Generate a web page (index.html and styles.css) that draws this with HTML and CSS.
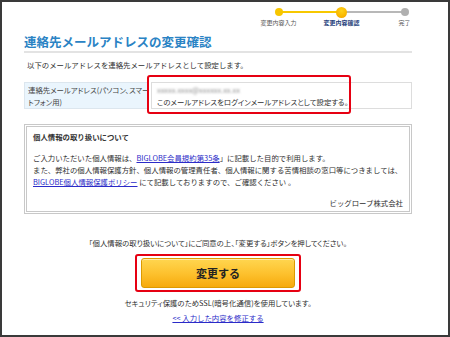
FILE: index.html
```html
<!DOCTYPE html>
<html lang="ja">
<head>
<meta charset="utf-8">
<title>連絡先メールアドレスの変更確認</title>
<link rel="stylesheet" href="styles.css">
</head>
<body>
<div class="frame">
  <div class="main">
    <div class="steps">
      <div class="step done first">
        <div class="dot-box"><span class="dot"></span></div>
        <div class="step-label">変更内容入力</div>
      </div>
      <div class="step current">
        <div class="dot-box"><span class="dot"></span></div>
        <div class="step-label">変更内容確認</div>
      </div>
      <div class="step todo last">
        <div class="dot-box"><span class="dot"></span></div>
        <div class="step-label">完了</div>
      </div>
    </div>

    <h1 class="title">連絡先メールアドレスの変更確認</h1>
    <p class="intro">以下のメールアドレスを連絡先メールアドレスとして設定します。</p>

    <div class="row">
      <div class="row-label">連絡先メールアドレス(パソコン、スマー<br>トフォン用)</div>
      <div class="row-value">
        <span class="blur">xxxxx.xxxx@xxxxxx.xx.xx</span><br>
        このメールアドレスをログインメールアドレスとして設定する。
      </div>
      <div class="highlight row-highlight"></div>
    </div>

    <div class="info">
      <div class="info-title">個人情報の取り扱いについて</div>
      <p class="info-text">ご入力いただいた個人情報は、<a href="#" class="link">BIGLOBE会員規約第35条</a>」に記載した目的で利用します。<br>また、弊社の個人情報保護方針、個人情報の管理責任者、個人情報に関する苦情相談の窓口等につきましては、<br><a href="#" class="link">BIGLOBE個人情報保護ポリシー</a> にて記載しておりますので、ご確認ください 。</p>
      <p class="company">ビッグローブ株式会社</p>
    </div>

    <p class="agree">「個人情報の取り扱いについて」にご同意の上、「変更する」ボタンを押してください。</p>

    <div class="btn-wrap">
      <div class="btn-holder">
        <button class="btn" type="button">変更する</button>
        <div class="highlight btn-highlight"></div>
      </div>
    </div>

    <p class="ssl">セキュリティ保護のためSSL(暗号化通信)を使用しています。</p>
    <p class="back"><a href="#" class="link">&lt;&lt; 入力した内容を修正する</a></p>
  </div>
</div>
</body>
</html>
```

FILE: styles.css
```css
* {
  box-sizing: border-box;
}

body {
  margin: 0;
  background: #fff;
  color: #2e2e2e;
  font-family: "Noto Sans CJK JP", "Noto Sans", sans-serif;
  font-size: 7.4px;
  line-height: 12px;
}

p {
  margin: 0;
}

.frame {
  width: 450px;
  height: 337px;
  border: 2px solid #3a3a3a;
  overflow: hidden;
}

.main {
  padding: 0 36px 0 22px;
}

/* step indicator */
.steps {
  display: flex;
  width: 189px;
  margin: 3px 0 0 223px;
}

.step {
  width: 63px;
  display: flex;
  flex-direction: column;
  align-items: center;
}

.dot-box {
  position: relative;
  width: 100%;
  height: 14px;
  display: flex;
  align-items: center;
  justify-content: center;
}

.dot-box::before,
.dot-box::after {
  content: "";
  position: absolute;
  top: 6px;
  height: 2px;
  width: 50%;
}

.dot-box::before {
  left: 0;
}

.dot-box::after {
  right: 0;
}

.done .dot-box::after,
.current .dot-box::before {
  background: #f7c800;
}

.current .dot-box::after,
.todo .dot-box::before {
  background: #b8b8b8;
}

.first .dot-box::before,
.last .dot-box::after {
  display: none;
}

.dot {
  position: relative;
  z-index: 1;
  width: 8px;
  height: 8px;
  border-radius: 50%;
  background: #f7c600;
}

.current .dot {
  width: 11px;
  height: 11px;
  background: radial-gradient(circle at 50% 35%, #ffd21a 0%, #f9b800 60%, #f29a00 100%);
}

.todo .dot {
  background: #b0b0b0;
}

.step-label {
  font-size: 6px;
  line-height: 8px;
  white-space: nowrap;
  color: #555;
}

.current .step-label {
  color: #1d3d7a;
  font-weight: bold;
}

/* title */
.title {
  margin: 7px 0 0;
  font-size: 12.5px;
  line-height: 16px;
  font-weight: bold;
  color: #2a83c4;
  padding-bottom: 1px;
  border-bottom: 2px solid #e3e3e3;
  white-space: nowrap;
}

.intro {
  margin-top: 6px;
  padding-left: 3px;
}

/* row */
.row {
  position: relative;
  display: flex;
  margin-top: 11px;
}

.row-label {
  width: 125px;
  flex: none;
  background: #eaf5fd;
  border: 1px solid #dce6ee;
  padding: 1px 3px 0;
  white-space: nowrap;
  font-feature-settings: "palt";
  color: #444;
}

.row-value {
  flex: 1;
  margin-left: 2px;
  border: 1px solid #dddddd;
  padding: 1px 5px 0;
  white-space: nowrap;
  font-feature-settings: "palt";
}

.blur {
  display: inline-block;
  color: #8a8a8a;
  filter: blur(1.1px);
}

.highlight {
  position: absolute;
  border: 2px solid #e60012;
  border-radius: 3px;
  pointer-events: none;
}

.row-highlight {
  left: 123px;
  top: -7px;
  width: 204px;
  height: 39px;
}

/* info box */
.info {
  margin-top: 15px;
  border: 3px double #c8c8c8;
  padding: 4px 6px 2px;
}

.info-title {
  font-weight: bold;
  color: #333;
}

.info-text {
  margin-top: 9px;
  white-space: nowrap;
}

.link {
  color: #2b2bc8;
  text-decoration: underline;
}

.company {
  margin-top: 9px;
  text-align: right;
}

/* bottom */
.agree {
  margin-top: 23px;
  text-align: center;
  font-feature-settings: "palt";
}

.btn-wrap {
  display: flex;
  justify-content: center;
  margin-top: 9px;
}

.btn-holder {
  position: relative;
}

.btn {
  display: block;
  width: 154px;
  height: 30px;
  margin: 0;
  border: 1px solid #dc9a00;
  border-radius: 3px;
  background: linear-gradient(#ffd650 0%, #fdc22f 50%, #f6aa0c 100%);
  box-shadow: inset 0 1px 0 rgba(255, 255, 255, 0.5);
  font-family: "Noto Sans CJK JP", "Noto Sans", sans-serif;
  font-size: 11px;
  font-weight: bold;
  color: #222;
  padding: 0;
}

.btn-highlight {
  left: -6px;
  top: -4px;
  right: -6px;
  bottom: -4px;
}

.ssl {
  margin-top: 9px;
  text-align: center;
  font-feature-settings: "palt";
}

.back {
  margin-top: 3px;
  text-align: center;
}
```
